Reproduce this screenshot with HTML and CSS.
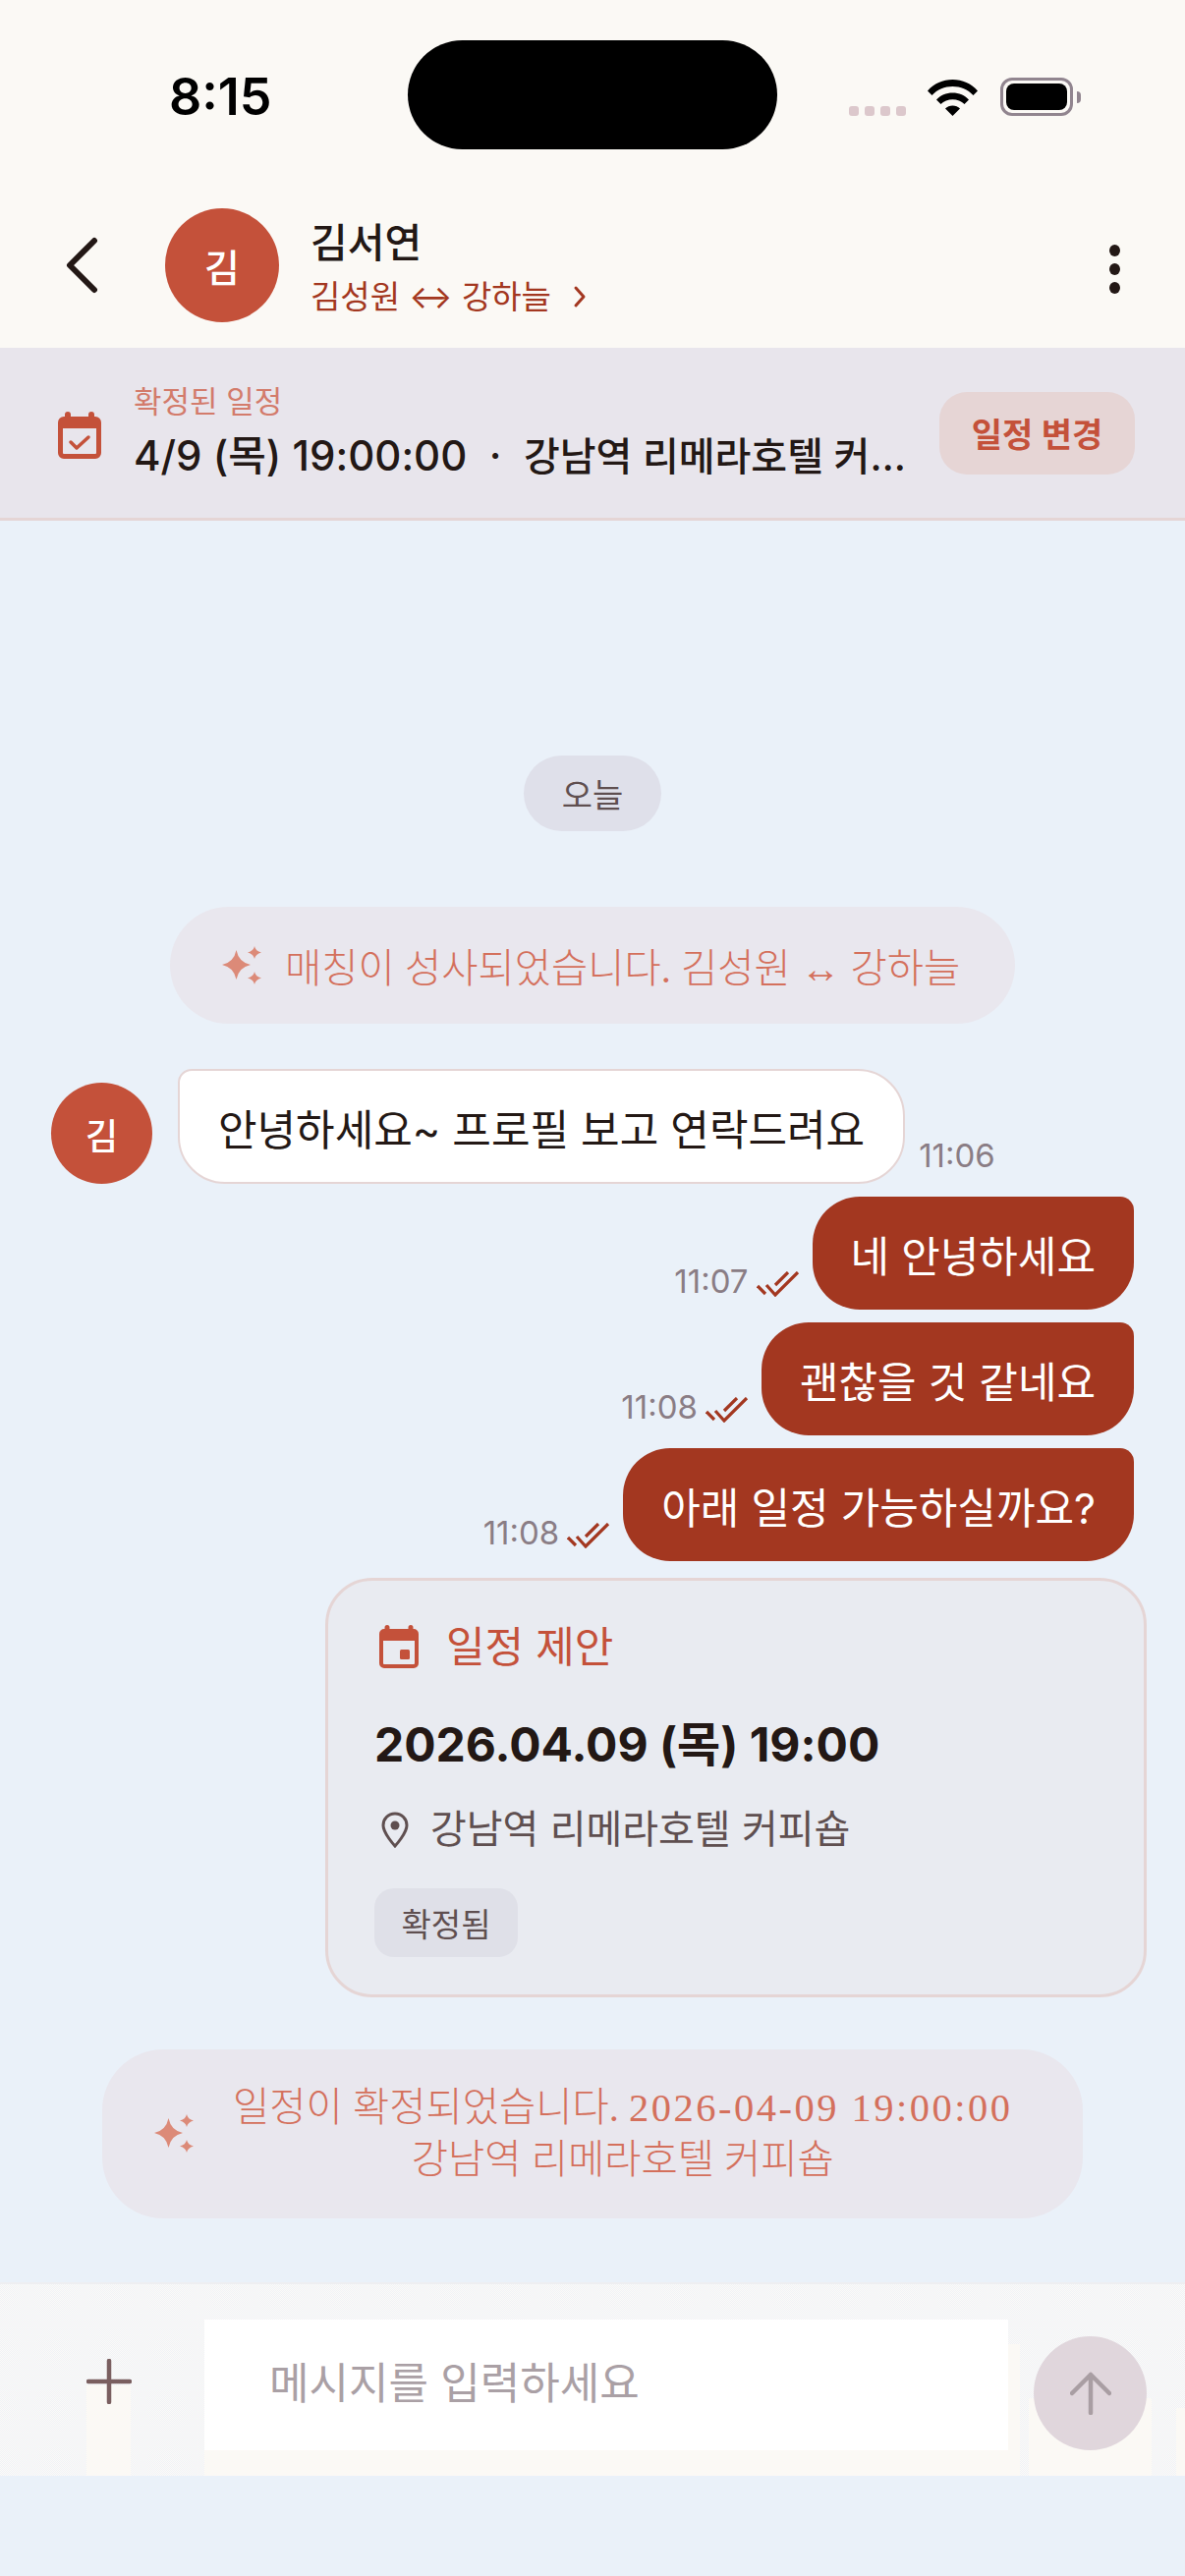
FILE: index.html
```html
<!DOCTYPE html>
<html lang="ko">
<head>
    <meta charset="UTF-8">
    <meta name="viewport" content="width=device-width, initial-scale=1.0">
    <title>김서연</title>
    <link rel="stylesheet" href="styles.css">
</head>
<body>

  <!-- Status bar -->
  <div class="status-bar">
    <span class="status-time">8:15</span>
    <div class="island"></div>
    <div class="status-icons">
      <div class="signal"><i></i><i></i><i></i><i></i></div>
      <svg class="wifi" width="51" height="38" viewBox="0 0 51 38">
        <path d="M0 12.500C6.500 5 15.500 1 25.500 1S44.500 5 51 12.500L46.500 17C41 11 33.500 8 25.500 8S10 11 4.500 17Z"/>
        <path d="M9 21.500C13 17 19 14.500 25.500 14.500S38 17 42 21.500L37.500 26C34.500 23 30 21.300 25.500 21.300S16.500 23 13.500 26Z"/>
        <path d="M18 30.500C20 28.500 22.500 27.500 25.500 27.500S31 28.500 33 30.500L25.500 38Z"/>
      </svg>
      <div class="battery"><div class="battery-fill"></div></div>
      <div class="battery-cap"></div>
    </div>
  </div>

  <!-- Header -->
  <header class="chat-header">
    <svg class="back" width="36" height="58" viewBox="0 0 36 58">
      <path d="M31 4L6 29L31 54" fill="none" stroke="#231815" stroke-width="6" stroke-linecap="round" stroke-linejoin="round"/>
    </svg>
    <div class="avatar avatar-lg">김</div>
    <div class="peer">
      <div class="peer-name">김서연</div>
      <div class="peer-sub">김성원 ↔ 강하늘
        <svg width="14" height="24" viewBox="0 0 14 24"><path d="M3 3L11 12L3 21" fill="none" stroke="#a33720" stroke-width="3" stroke-linecap="round" stroke-linejoin="round"/></svg>
      </div>
    </div>
    <div class="kebab"><i></i><i></i><i></i></div>
  </header>

  <!-- Confirmed schedule banner -->
  <section class="banner">
    <svg class="banner-icon" width="44" height="48" viewBox="0 0 44 48">
      <path fill="#c4513a" d="M10 0a3 3 0 0 1 3 3v2h18V3a3 3 0 0 1 6 0v2h1a6 6 0 0 1 6 6v31a6 6 0 0 1-6 6H6a6 6 0 0 1-6-6V11a6 6 0 0 1 6-6h1V3a3 3 0 0 1 3-3ZM5 17v25a1 1 0 0 0 1 1h32a1 1 0 0 0 1-1V17Z"/>
      <path d="M13 31l6 6 12-11" fill="none" stroke="#c4513a" stroke-width="3.500" stroke-linecap="round" stroke-linejoin="round"/>
    </svg>
    <div class="banner-body">
      <div class="banner-label">확정된 일정</div>
      <div class="banner-text">4/9 (목) 19:00:00 &nbsp;·&nbsp; <span class="banner-place">강남역 리메라호텔 커…</span></div>
    </div>
    <button class="banner-button">일정 변경</button>
  </section>

  <!-- Messages -->
  <main class="chat">
    <div class="date-pill">오늘</div>

    <div class="system-pill system-match">
      <svg class="sparkle" width="42" height="40" viewBox="0 0 42 40"><use href="#sparkles"/></svg>
      <span>매칭이 성사되었습니다. 김성원 ↔ 강하늘</span>
    </div>

    <div class="row row-in">
      <div class="avatar avatar-sm">김</div>
      <div class="bubble bubble-in">안녕하세요~ 프로필 보고 연락드려요</div>
      <span class="time">11:06</span>
    </div>

    <div class="row row-out">
      <span class="time">11:07</span>
      <svg class="check" width="44" height="26" viewBox="0 0 44 26"><use href="#double-check"/></svg>
      <div class="bubble bubble-out">네 안녕하세요</div>
    </div>
    <div class="row row-out">
      <span class="time">11:08</span>
      <svg class="check" width="44" height="26" viewBox="0 0 44 26"><use href="#double-check"/></svg>
      <div class="bubble bubble-out">괜찮을 것 같네요</div>
    </div>
    <div class="row row-out">
      <span class="time">11:08</span>
      <svg class="check" width="44" height="26" viewBox="0 0 44 26"><use href="#double-check"/></svg>
      <div class="bubble bubble-out">아래 일정 가능하실까요?</div>
    </div>

    <div class="proposal">
      <div class="proposal-title">
        <svg width="40" height="44" viewBox="0 0 40 44">
          <path fill="#c4513a" d="M8 0a2.500 2.500 0 0 1 2.500 2.500V4h19V2.500a2.500 2.500 0 0 1 5 0V4H35a5 5 0 0 1 5 5v30a5 5 0 0 1-5 5H5a5 5 0 0 1-5-5V9a5 5 0 0 1 5-5h.5V2.500A2.500 2.500 0 0 1 8 0ZM4 16v23a1 1 0 0 0 1 1h30a1 1 0 0 0 1-1V16Z"/>
          <rect x="21" y="25" width="10" height="10" rx="1.500" fill="#c4513a"/>
        </svg>
        <span>일정 제안</span>
      </div>
      <div class="proposal-date">2026.04.09 (목) 19:00</div>
      <div class="proposal-place">
        <svg width="28" height="37" viewBox="0 0 28 37">
          <path d="M14 2C7 2 2 7.500 2 14C2 22 14 35 14 35S26 22 26 14C26 7.500 21 2 14 2Z" fill="none" stroke="#5f4f50" stroke-width="3"/>
          <circle cx="14" cy="14" r="4.500" fill="#5f4f50"/>
        </svg>
        <span>강남역 리메라호텔 커피숍</span>
      </div>
      <span class="proposal-badge">확정됨</span>
    </div>

    <div class="system-pill system-confirm">
      <svg class="sparkle" width="42" height="40" viewBox="0 0 42 40"><use href="#sparkles"/></svg>
      <span>일정이 확정되었습니다. <span class="system-num">2026-04-09 19:00:00</span><br>강남역 리메라호텔 커피숍</span>
    </div>
  </main>

  <!-- Composer -->
  <footer class="composer">
    <div class="composer-plus">
      <svg width="46" height="46" viewBox="0 0 46 46">
        <path d="M23 2V44M2 23H44" fill="none" stroke="#7a5f60" stroke-width="4.500" stroke-linecap="round"/>
      </svg>
    </div>
    <div class="composer-field">
      <div class="composer-input">메시지를 입력하세요</div>
    </div>
    <div class="composer-send">
      <div class="send-button">
        <svg width="42" height="44" viewBox="0 0 42 44">
          <path d="M21 42V3M2 22L21 3L40 22" fill="none" stroke="#a99ea3" stroke-width="4.500" stroke-linecap="round" stroke-linejoin="round"/>
        </svg>
      </div>
    </div>
    <div class="composer-edge"></div>
  </footer>

  <!-- Shared icons -->
  <svg class="icon-defs" width="0" height="0">
    <defs>
      <g id="sparkles" fill="#dc8a78">
        <path d="M14.500 4Q17 16.500 29 19Q17 21.500 14.500 34Q12 21.500 0 19Q12 16.500 14.500 4Z"/>
        <path d="M33 0Q34 5 40 6.500Q34 8 33 13Q32 8 26 6.500Q32 5 33 0Z"/>
        <path d="M33 26Q34 31 40 32.500Q34 34 33 39Q32 34 26 32.500Q32 31 33 26Z"/>
      </g>
      <g id="double-check" fill="none" stroke="#a33720" stroke-width="3.200">
        <path d="M1 15L9 23"/>
        <path d="M10 14L19 24L42 1"/>
        <path d="M19 14L32 1"/>
      </g>
    </defs>
  </svg>

</body>
</html>
```

FILE: styles.css
```css
* {
  margin: 0;
  padding: 0;
  box-sizing: border-box;
}

body {
  width: 1206px;
  height: 2622px;
  overflow: hidden;
  background-color: #eaf1f9;
  color: #231815;
  font-family: Inter, "Noto Sans CJK KR", sans-serif;
}

/* Status bar */
.status-bar {
  height: 192px;
  background-color: #fbf9f5;
  padding: 41px 0 0 172px;
  display: flex;
  align-items: flex-start;
}

.status-time {
  width: 243px;
  margin-top: 30px;
  font-size: 52px;
  line-height: 56px;
  font-weight: 600;
  color: #000;
}

.island {
  width: 376px;
  height: 111px;
  border-radius: 56px;
  background-color: #000;
}

.status-icons {
  display: flex;
  align-items: flex-end;
  margin: 38px 0 0 73px;
}

.signal {
  display: flex;
  gap: 6px;
  margin: 0 22px 0 0;
}

.signal i {
  width: 10px;
  height: 10px;
  border-radius: 3px;
  background-color: #dcc8cc;
}

.wifi {
  fill: #000;
  margin-right: 23px;
}

.battery {
  width: 74px;
  height: 39px;
  border: 3px solid #91858f;
  border-radius: 12px;
  padding: 3px;
}

.battery-fill {
  height: 100%;
  border-radius: 8px;
  background-color: #000;
}

.battery-cap {
  width: 4px;
  height: 12px;
  margin: 0 0 13px 4px;
  border-radius: 0 4px 4px 0;
  background-color: #91858f;
}

/* Header */
.chat-header {
  height: 162px;
  background-color: #fbf9f5;
  display: flex;
  align-items: flex-start;
  padding: 20px 0 0 65px;
}

.back {
  margin: 29px 67px 0 0;
}

.avatar {
  flex: none;
  border-radius: 50%;
  background-color: #c4513a;
  color: white;
  display: flex;
  align-items: center;
  justify-content: center;
  font-weight: 500;
}

.avatar-lg {
  width: 116px;
  height: 116px;
  font-size: 39px;
}

.avatar-sm {
  width: 103px;
  height: 103px;
  font-size: 36px;
}

.peer {
  margin-left: 32px;
  width: 796px;
}

.peer-name {
  margin-top: 9px;
  font-size: 41px;
  line-height: 52px;
  font-weight: 500;
}

.peer-sub {
  margin-top: 6px;
  font-size: 33px;
  line-height: 46px;
  color: #a33720;
  display: flex;
  align-items: center;
  gap: 22px;
}

.kebab {
  display: flex;
  flex-direction: column;
  gap: 7px;
  margin: 37px 0 0 17px;
}

.kebab i {
  width: 11px;
  height: 12px;
  border-radius: 50%;
  background-color: #231815;
}

/* Banner */
.banner {
  height: 176px;
  background-color: #e8e5ec;
  border-bottom: 3px solid #e5d5d5;
  display: flex;
  align-items: center;
  padding: 0 51px 0 59px;
}

.banner-icon {
  flex: none;
  margin: 4px 33px 0 0;
}

.banner-body {
  width: 787px;
  flex: none;
}

.banner-label {
  font-size: 31px;
  line-height: 38px;
  color: #d37b6b;
}

.banner-text {
  margin-top: 10px;
  font-size: 42px;
  line-height: 52px;
  font-weight: 500;
  white-space: nowrap;
}

.banner-place {
  font-size: 40px;
}

.banner-button {
  flex: none;
  width: 199px;
  height: 84px;
  margin-left: 33px;
  border: none;
  border-radius: 28px;
  background-color: #e6d5d5;
  color: #c4513a;
  font-family: inherit;
  font-size: 34px;
  font-weight: 600;
}

/* Messages */
.chat {
  height: 1793px;
  display: flex;
  flex-direction: column;
  align-items: center;
  padding-top: 239px;
}

.date-pill {
  width: 140px;
  height: 77px;
  border-radius: 39px;
  background-color: #dfe0ea;
  color: #5f4f50;
  font-size: 34px;
  display: flex;
  align-items: center;
  justify-content: center;
}

.system-pill {
  display: flex;
  align-items: center;
  background-color: #e9e7ee;
  color: #d4705c;
  font-family: "Liberation Serif", "Noto Sans CJK KR", serif;
  font-weight: 300;
  font-size: 40.500px;
  text-align: center;
}

.system-num {
  letter-spacing: 2.500px;
}

.system-match {
  width: 860px;
  height: 119px;
  margin-top: 77px;
  border-radius: 60px;
  padding-left: 53px;
  gap: 22px;
}

.system-confirm {
  width: 998px;
  height: 172px;
  margin-top: 53px;
  border-radius: 62px;
  padding-left: 53px;
  gap: 38px;
  line-height: 53px;
}

.row {
  width: 100%;
  display: flex;
  align-items: flex-end;
}

.row-in {
  margin-top: 46px;
  padding-left: 52px;
}

.row-out {
  justify-content: flex-end;
  padding-right: 52px;
  margin-top: 13px;
}

.bubble {
  height: 115px;
  display: flex;
  align-items: center;
  font-size: 43px;
  white-space: nowrap;
  border-radius: 48px;
  padding: 0 39px;
}

.bubble-in {
  height: 117px;
  margin: 0 14px 0 26px;
  background-color: white;
  border: 2px solid #e5d5d5;
  border-top-left-radius: 14px;
}

.bubble-out {
  background-color: #a33720;
  color: white;
  border-top-right-radius: 14px;
}

.time {
  margin-bottom: 9px;
  font-size: 33px;
  line-height: 40px;
  color: #8a7d85;
}

.check {
  margin: 0 13px 13px 8px;
}

/* Proposal card */
.proposal {
  align-self: flex-end;
  width: 836px;
  height: 427px;
  margin: 17px 39px 0 0;
  padding: 42px 0 0 47px;
  border: 3px solid #e5d5d5;
  border-radius: 48px;
  background-color: #e9ebf1;
}

.proposal-title {
  display: flex;
  align-items: center;
  gap: 28px;
  margin-left: 5px;
  font-size: 43px;
  line-height: 50px;
  color: #c4513a;
}

.proposal-date {
  margin-top: 44px;
  font-size: 48px;
  line-height: 62px;
  font-weight: 700;
}

.proposal-place {
  display: flex;
  align-items: center;
  gap: 22px;
  margin: 28px 0 0 7px;
  font-size: 40px;
  line-height: 54px;
  color: #5f4f50;
}

.proposal-badge {
  display: inline-flex;
  align-items: center;
  justify-content: center;
  width: 146px;
  height: 70px;
  margin-top: 33px;
  border-radius: 20px;
  background-color: #dfe0e8;
  color: #5f4f50;
  font-size: 33px;
}

/* Composer */
.composer {
  height: 197px;
  display: flex;
  background: repeating-conic-gradient(#fbfaf8 0 25%, #f0f2f6 0 50%) 0 0 / 2px 2px;
  border-top: 2px solid #eeeef1;
}

.composer-plus {
  width: 45px;
  margin-left: 88px;
  padding-top: 76px;
  background: linear-gradient(transparent 103px, #fbf9f5 103px);
}

.composer-field {
  width: 830px;
  margin-left: 75px;
  padding-top: 36px;
  background: linear-gradient(transparent 61px, #fbf9f5 61px);
}

.composer-input {
  width: 818px;
  height: 133px;
  background-color: white;
  color: #aaa0a5;
  font-size: 44px;
  line-height: 130px;
  padding-left: 66px;
}

.composer-send {
  width: 125px;
  margin-left: 9px;
  padding: 53px 0 0 5px;
  background: linear-gradient(transparent 116px, #fbf9f5 116px);
}

.composer-edge {
  width: 9px;
  margin-left: 25px;
  background: linear-gradient(transparent 126px, #fbf9f5 126px);
}

.send-button {
  width: 115px;
  height: 116px;
  border-radius: 50%;
  background-color: #e0d6dc;
  display: flex;
  align-items: center;
  justify-content: center;
}

.icon-defs {
  position: absolute;
}
```
